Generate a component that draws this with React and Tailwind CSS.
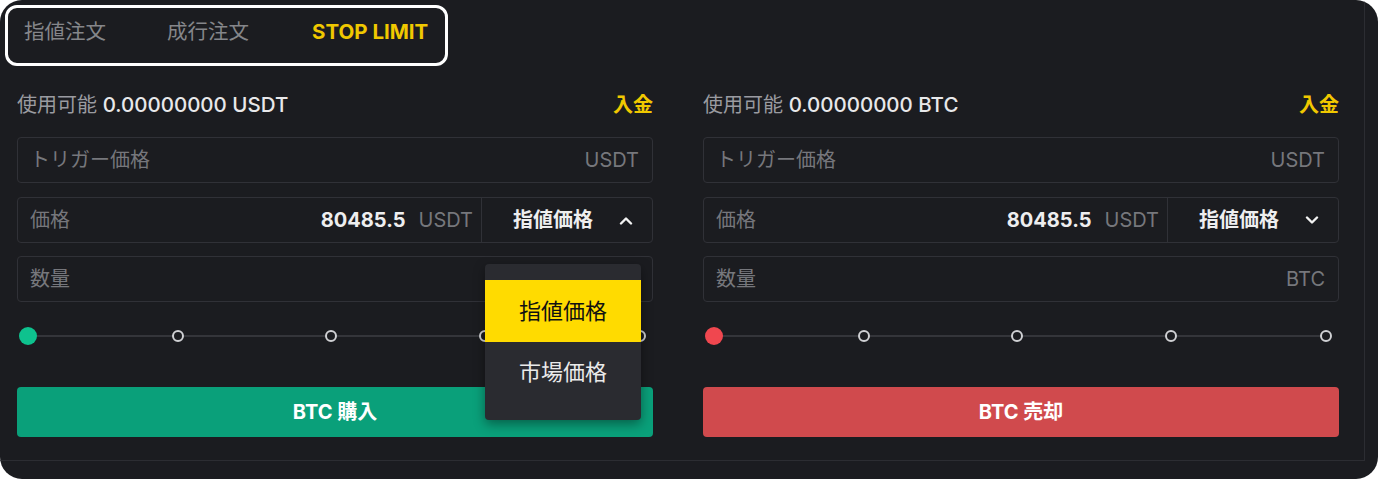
import React from "react";

const FONT = { fontFamily: 'Inter, "Noto Sans CJK JP", sans-serif' };

function Chevron({ up }) {
  return (
    <svg width="14" height="9" viewBox="0 0 14 9" fill="none">
      <polyline
        points={up ? "2,7.5 7,2.5 12,7.5" : "2,1.5 7,6.5 12,1.5"}
        stroke="#f2f2f2"
        strokeWidth="2.4"
        strokeLinecap="round"
        strokeLinejoin="round"
      />
    </svg>
  );
}

function Slider({ color }) {
  const stops = [0, 150, 303, 457, 612];
  return (
    <div className="mt-[24px] ml-[11px] mr-[13px] h-[20px] relative">
      <div className="absolute left-0 right-0 top-[9px] h-[2px] bg-[#34353a]" />
      {stops.map((p, i) =>
        i === 0 ? (
          <div
            key={i}
            className={`absolute top-[1px] w-[18px] h-[18px] rounded-full -translate-x-1/2 ${color}`}
            style={{ left: `${p}px` }}
          />
        ) : (
          <div
            key={i}
            className="absolute top-[4px] w-[12px] h-[12px] rounded-full border-2 border-[#cfd0d3] bg-[#1b1c20] -translate-x-1/2"
            style={{ left: `${p}px` }}
          />
        )
      )}
    </div>
  );
}

function Column({ asset, up, btnColor, btnText, dotColor, dropdown }) {
  return (
    <div className="w-[636px] flex flex-col">
      <div className="h-[28px] flex items-center justify-between text-[20px] leading-[28px]">
        <div>
          <span className="text-[#9a9ba0]">使用可能 </span>
          <span className="text-[#e8e8ea] font-medium text-[20.5px]">0.00000000 {asset}</span>
        </div>
        <span className="text-[#f0c800] font-bold">入金</span>
      </div>

      <div className="mt-[18px] h-[46px] border border-[#303137] rounded-[4px] flex items-center justify-between pl-[12px] pr-[13px] text-[20px] text-[#76777c]">
        <span>トリガー価格</span>
        <span>USDT</span>
      </div>

      <div className="mt-[14px] h-[46px] border border-[#303137] rounded-[4px] flex items-stretch relative">
        <div className="flex-1 flex items-center pl-[12px] pr-[8px] text-[20px]">
          <span className="text-[#76777c]">価格</span>
          <span className="ml-auto text-[#eeeeef] font-bold">80485.5</span>
          <span className="ml-[13px] text-[#76777c]">USDT</span>
        </div>
        <div className="w-[171px] border-l border-[#303137] flex items-center pl-[31px] pr-[19px] justify-between">
          <span className="text-[20px] font-bold text-[#eeeeef]">指値価格</span>
          <Chevron up={up} />
        </div>
        {dropdown && (
          <div className="absolute z-10 top-[66px] left-[467px] w-[156px] bg-[#2a2b30] rounded-[4px] pt-[16px] pb-[17px] shadow-[0_4px_12px_rgba(0,0,0,0.4)]">
            <div className="h-[62px] bg-[#ffdb00] flex items-center justify-center text-[22px] text-[#111]">
              指値価格
            </div>
            <div className="h-[61px] flex items-center justify-center text-[22px] text-[#eaeaea]">
              市場価格
            </div>
          </div>
        )}
      </div>

      <div className="mt-[13px] h-[46px] border border-[#303137] rounded-[4px] flex items-center justify-between pl-[12px] pr-[13px] text-[20px] text-[#76777c]">
        <span>数量</span>
        <span>BTC</span>
      </div>

      <Slider color={dotColor} />

      <div
        className={`mt-[41px] h-[50px] rounded-[4px] flex items-center justify-center text-[20px] font-bold text-white ${btnColor}`}
      >
        {btnText}
      </div>
    </div>
  );
}

export default function App() {
  return (
    <div className="w-[1378px] h-[479px] bg-white" style={FONT}>
      <div className="w-[1378px] h-[479px] rounded-[22px] bg-[#1b1c20] overflow-hidden">
        <div className="w-[1365px] h-[461px] border-r border-b border-[#2c2d32] flex flex-col">
          <div className="ml-[5px] mt-[5px] w-[443px] h-[61px] border-[3px] border-white rounded-[12px] flex pl-[16px] pt-[10px] text-[20.5px] leading-[28px]">
            <span className="text-[#85868a]">指値注文</span>
            <span className="ml-[61px] text-[#85868a]">成行注文</span>
            <span className="ml-[63px] text-[#f0c800] font-bold">STOP LIMIT</span>
          </div>

          <div className="mt-[25px] pl-[17px] flex gap-[50px]">
            <Column
              asset="USDT"
              up
              dotColor="bg-[#0ec28e]"
              btnColor="bg-[#0aa07a]"
              btnText="BTC 購入"
              dropdown
            />
            <Column
              asset="BTC"
              up={false}
              dotColor="bg-[#f0474f]"
              btnColor="bg-[#d04a4d]"
              btnText="BTC 売却"
            />
          </div>
        </div>
      </div>
    </div>
  );
}
